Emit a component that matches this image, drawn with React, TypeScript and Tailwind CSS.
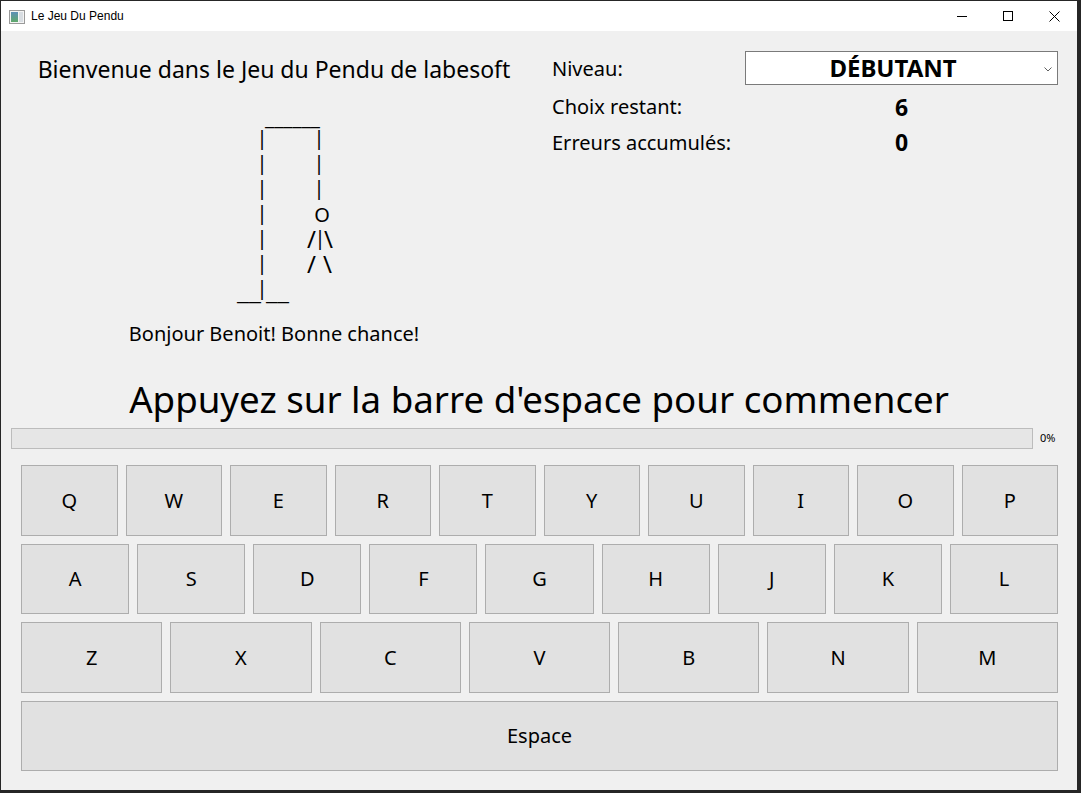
import React from "react";

const row1 = ["Q", "W", "E", "R", "T", "Y", "U", "I", "O", "P"];
const row2 = ["A", "S", "D", "F", "G", "H", "J", "K", "L"];
const row3 = ["Z", "X", "C", "V", "B", "N", "M"];

const FONT = "font-['Noto_Sans','Open_Sans',sans-serif]";

function Key({ label }: { label: string }) {
  return (
    <button
      type="button"
      className="flex-1 h-full flex items-center justify-center bg-[#e1e1e1] border border-[#adadad] text-[20px] text-black"
    >
      {label}
    </button>
  );
}

function WindowIcon() {
  return (
    <svg width="16" height="14" viewBox="0 0 16 14">
      <defs>
        <linearGradient id="pane" x1="0" y1="0" x2="0" y2="1">
          <stop offset="0" stopColor="#5d8fb8" />
          <stop offset="1" stopColor="#5fa86a" />
        </linearGradient>
      </defs>
      <rect x="0.5" y="0.5" width="15" height="13" fill="#f4f4f4" stroke="#9a9a9a" />
      <rect x="2" y="2" width="7" height="10" fill="url(#pane)" />
      <rect x="10" y="2" width="4" height="10" fill="#d8dde2" />
    </svg>
  );
}

function Hangman() {
  // page coordinates: the svg sits at x=20, y=87
  const g = { fontSize: 20, fill: "#000", textAnchor: "middle" as const };
  return (
    <svg width="508" height="233" viewBox="20 87 508 233" className="block">
      <g fontFamily="Noto Sans, sans-serif">
        <text x="265" y="125" fontSize="20" textLength="55" lengthAdjust="spacingAndGlyphs">
          ______
        </text>
        {[145, 170, 195, 220, 245, 270, 295].map((y) => (
          <text key={y} x="262" y={y} {...g}>
            |
          </text>
        ))}
        {[145, 170, 195].map((y) => (
          <text key={"r" + y} x="319" y={y} {...g}>
            |
          </text>
        ))}
        <text x="322" y="222" {...g}>
          O
        </text>
        <text x="311.5" y="248" {...g} fontSize="24">
          /
        </text>
        <text x="320" y="245" {...g}>
          |
        </text>
        <text x="328.5" y="248" {...g} fontSize="24">
          \
        </text>
        <text x="311.5" y="273" {...g} fontSize="24">
          /
        </text>
        <text x="327.5" y="273" {...g} fontSize="24">
          \
        </text>
        <text x="237" y="300" fontSize="20" textLength="24" lengthAdjust="spacingAndGlyphs">
          __
        </text>
        <text x="266" y="300" fontSize="20" textLength="23" lengthAdjust="spacingAndGlyphs">
          __
        </text>
      </g>
    </svg>
  );
}

export default function App() {
  return (
    <div className={`w-[1081px] h-[793px] bg-[#262626] pl-px pt-px pr-[4px] pb-[3px] ${FONT}`}>
      <div className="w-full h-full flex flex-col">
        {/* title bar */}
        <div className="h-[30px] bg-white flex items-center shrink-0">
          <div className="ml-[8px] mt-[1px]">
            <WindowIcon />
          </div>
          <span className="ml-[6px] text-[12px] text-black font-['Liberation_Sans',sans-serif]">Le Jeu Du Pendu</span>
          <div className="ml-auto flex items-center h-full">
            <div className="w-[46px] h-full flex items-center justify-center">
              <svg width="10" height="10" viewBox="0 0 10 10">
                <path d="M0 5.5h10" stroke="#000" strokeWidth="1" />
              </svg>
            </div>
            <div className="w-[46px] h-full flex items-center justify-center">
              <svg width="10" height="10" viewBox="0 0 10 10">
                <rect x="0.5" y="0.5" width="9" height="9" fill="none" stroke="#000" strokeWidth="1" />
              </svg>
            </div>
            <div className="w-[46px] h-full flex items-center justify-center">
              <svg width="11" height="11" viewBox="0 0 11 11">
                <path d="M0.5 0.5l10 10M10.5 0.5l-10 10" stroke="#000" strokeWidth="1" />
              </svg>
            </div>
          </div>
        </div>

        {/* body */}
        <div className="flex-1 bg-[#f0f0f0] flex flex-col">
          <div className="flex pt-[20px]">
            {/* left column */}
            <div className="ml-[19px] w-[508px] flex flex-col items-center">
              <div className="h-[36px] leading-[36px] text-[23px] text-black whitespace-nowrap">
                Bienvenue dans le Jeu du Pendu de labesoft
              </div>
              <Hangman />
              <div className="h-[28px] leading-[28px] text-[20px] text-black whitespace-nowrap">
                Bonjour Benoit! Bonne chance!
              </div>
            </div>

            {/* right column */}
            <div className="ml-[24px] grid grid-cols-[193px_313px] auto-rows-min text-[20px] text-black">
              <div className="h-[35px] flex items-center">Niveau:</div>
              <div className="h-[34px] bg-white border border-[#7a7a7a] relative flex items-center justify-center pr-[17px]">
                <span className="text-[24px] font-bold">DÉBUTANT</span>
                <svg className="absolute right-[5px] top-[15px]" width="8" height="5" viewBox="0 0 8 5">
                  <path d="M0.5 0.5l3.5 3.5 3.5-3.5" fill="none" stroke="#606060" strokeWidth="1" />
                </svg>
              </div>
              <div className="h-[38px] pt-[4px] flex items-center">Choix restant:</div>
              <div className="h-[38px] pt-[4px] flex items-center justify-center text-[23px] font-bold">6</div>
              <div className="h-[35px] pt-[2px] flex items-center">Erreurs accumulés:</div>
              <div className="h-[35px] pt-[2px] flex items-center justify-center text-[23px] font-bold">0</div>
            </div>
          </div>

          <div className="mt-[26px] h-[50px] leading-[50px] text-center text-[36.7px] text-black">
            Appuyez sur la barre d'espace pour commencer
          </div>

          <div className="mt-[4px] flex items-center pl-[10px] h-[21px]">
            <div className="w-[1022px] h-[21px] bg-[#e6e6e6] border border-[#bcbcbc]" />
            <span className="ml-[7px] text-[11px] text-black">0%</span>
          </div>

          <div className="mt-[16px] pl-[20px] pr-[19px] flex flex-col gap-[8px]">
            <div className="h-[71px] flex gap-[8px]">
              {row1.map((k) => (
                <Key key={k} label={k} />
              ))}
            </div>
            <div className="h-[70px] flex gap-[8px]">
              {row2.map((k) => (
                <Key key={k} label={k} />
              ))}
            </div>
            <div className="h-[71px] flex gap-[8px]">
              {row3.map((k) => (
                <Key key={k} label={k} />
              ))}
            </div>
            <div className="h-[70px] flex">
              <Key label="Espace" />
            </div>
          </div>
        </div>
      </div>
    </div>
  );
}
